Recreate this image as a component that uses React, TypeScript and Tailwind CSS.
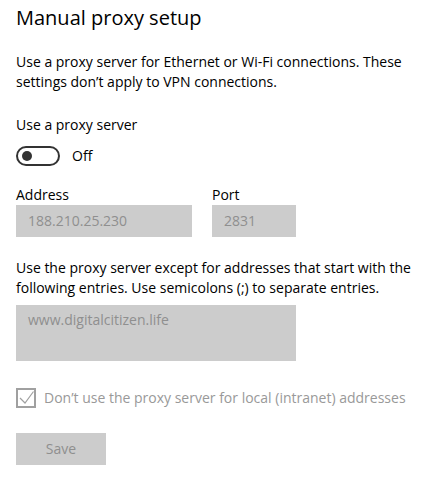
import React from "react";

export default function App() {
  const font = { fontFamily: '"Open Sans", "Noto Sans", sans-serif' };
  return (
    <div className="w-[430px] h-[480px] bg-white text-black overflow-hidden" style={font}>
      <div className="pl-4 pt-[4px] flex flex-col">
        <h1 className="text-[20px] leading-[28px] font-normal">Manual proxy setup</h1>
        <p className="mt-[20px] text-[14px] leading-[20px] w-[400px]">
          Use a proxy server for Ethernet or Wi-Fi connections. These settings don’t apply to VPN connections.
        </p>
        <div className="mt-[23px] text-[14px] leading-[20px]">Use a proxy server</div>
        <div className="mt-[11px] flex items-center gap-[12px] h-[20px]">
          <div className="w-[44px] h-[20px] rounded-full border-2 border-[#333] flex items-center pl-[4px]">
            <div className="w-[10px] h-[10px] rounded-full bg-[#333]" />
          </div>
          <span className="text-[14px] leading-[20px]">Off</span>
        </div>
        <div className="mt-[19px] flex gap-[20px]">
          <div className="flex flex-col">
            <span className="text-[14px] leading-[20px]">Address</span>
            <div className="w-[176px] h-[32px] bg-[#cccccc] text-[#8f8f8f] text-[14px] leading-[32px] pl-[12px]">
              188.210.25.230
            </div>
          </div>
          <div className="flex flex-col">
            <span className="text-[14px] leading-[20px]">Port</span>
            <div className="w-[84px] h-[32px] bg-[#cccccc] text-[#8f8f8f] text-[14px] leading-[32px] pl-[12px]">
              2831
            </div>
          </div>
        </div>
        <p className="mt-[21px] text-[14px] leading-[20px] w-[400px]">
          Use the proxy server except for addresses that start with the following entries. Use semicolons (;) to separate entries.
        </p>
        <div className="mt-[7px] w-[280px] h-[56px] bg-[#cccccc] text-[#8f8f8f] text-[14px] leading-[20px] pl-[12px] pt-[5px]">
          www.digitalcitizen.life
        </div>
        <div className="mt-[27px] flex items-center gap-[8px] h-[20px]">
          <div className="w-[20px] h-[20px] border-2 border-[#a0a0a0] flex items-center justify-center">
            <svg width="16" height="16" viewBox="0 0 16 16">
              <path d="M2 8 L7 13 L15.5 1.5" fill="none" stroke="#a0a0a0" strokeWidth="1.2" />
            </svg>
          </div>
          <span className="text-[14px] leading-[20px] text-[#999999]">
            Don’t use the proxy server for local (intranet) addresses
          </span>
        </div>
        <div className="mt-[25px] w-[90px] h-[32px] bg-[#cccccc] text-[#8f8f8f] text-[14px] leading-[32px] text-center">
          Save
        </div>
      </div>
    </div>
  );
}
